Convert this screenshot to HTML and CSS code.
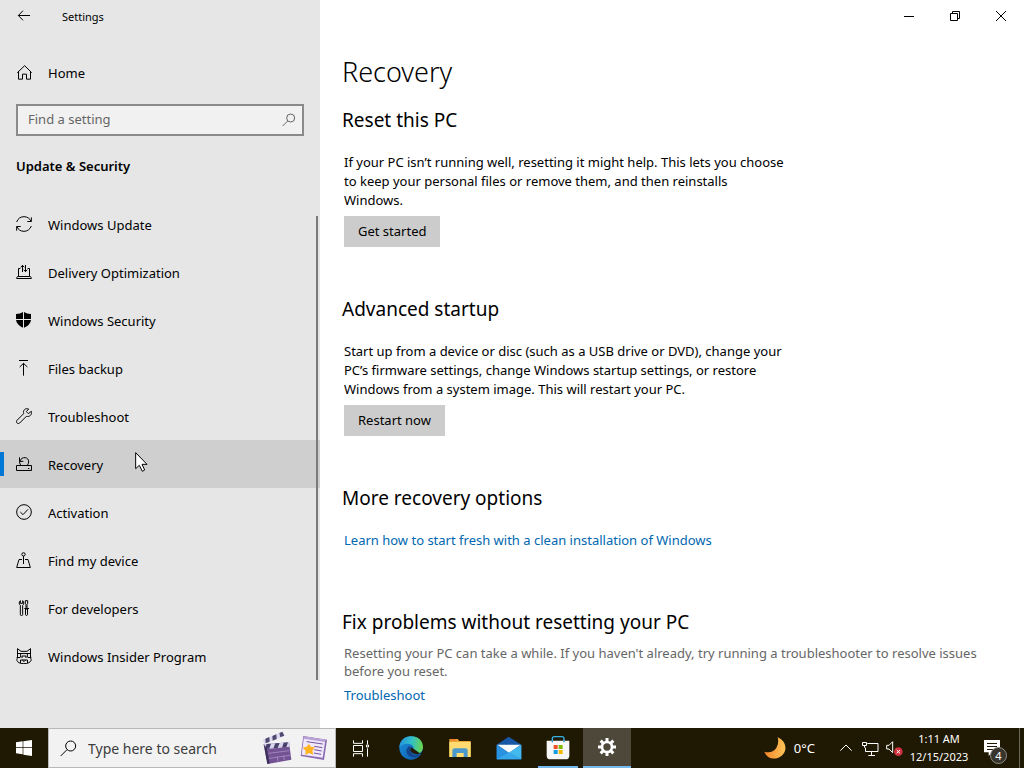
FILE: index.html
```html
<!DOCTYPE html>
<html lang="en">
<head>
    <meta charset="UTF-8">
    <meta name="viewport" content="width=device-width, initial-scale=1.0">
    <title>Settings</title>
    <link rel="stylesheet" href="styles.css">
</head>
<body>
    <div class="window">
        <aside class="sidebar">
            <div class="title-bar">
                <button class="back-button" aria-label="Back">
                    <svg width="16" height="16" viewBox="0 0 48 48" class="icon"><path d="M42 22.500H7M21 8L7 22.500 21 37"/></svg>
                </button>
                <span class="app-title">Settings</span>
            </div>

            <a href="#" class="nav-item">
                <svg width="16" height="16" viewBox="0 0 48 48" class="icon"><path d="M4 26L26 5l21 21M7.500 23v22.500h12v-15h12v15h12V23"/></svg>
                <span>Home</span>
            </a>

            <div class="setting-search">
                <input type="text" aria-label="Find a setting" placeholder="Find a setting">
                <svg width="14" height="14" viewBox="0 0 42 42" class="icon"><circle cx="26" cy="15" r="12"/><path d="M17 24L2 39"/></svg>
            </div>

            <h2 class="category">Update &amp; Security</h2>

            <nav class="nav">
                <a href="#" class="nav-item">
                    <svg width="16" height="16" viewBox="0 0 48 48" class="icon"><path d="M2 18C6 7 14 2 24 2c10 0 18 6 21 14M46 30c-4 10-12 16-22 16C14 46 6 41 3 32M46 4v12.500H34M2 44V31.500h12"/></svg>
                    <span>Windows Update</span>
                </a>
                <a href="#" class="nav-item">
                    <svg width="16" height="16" viewBox="0 0 48 48" class="icon"><path d="M13 13.500H7.500V36L2 40.500v3h44v-3L40.500 36V13.500H35M6 37.500h36M19.500 24V4M14 10l5.500-6 5.500 6M28.500 3v20M23 17l5.500 6 5.500-6"/></svg>
                    <span>Delivery Optimization</span>
                </a>
                <a href="#" class="nav-item">
                    <svg width="16" height="16" viewBox="0 0 48 48"><path d="M21 0v21H0V6c9 0 15-2 21-6zM24 0c6 4 12 6 21 6v15H24zM0 24h21v23C9 42 2 35 0 24zM24 24h21c-2 11-8 18-21 23z"/></svg>
                    <span>Windows Security</span>
                </a>
                <a href="#" class="nav-item">
                    <svg width="16" height="16" viewBox="0 0 48 48" class="icon"><path d="M9 1.500h27M22.500 47V10M11 21l11.500-11L34 21"/></svg>
                    <span>Files backup</span>
                </a>
                <a href="#" class="nav-item">
                    <svg width="16" height="16" viewBox="0 0 48 48" class="icon"><path d="M38 3C28-1 20 7 23 17L3 37c-3 3-2 6 0 8s6 2 8 0l20-20c10 3 18-6 15-15l-9 7-6-6z"/></svg>
                    <span>Troubleshoot</span>
                </a>
                <a href="#" class="nav-item active">
                    <svg width="16" height="16" viewBox="0 0 48 48" class="icon"><path d="M1.500 28.500h45v15h-45zM14 27c-3-4-4-8-2-12 5-15 27-13 26 3 0 4-2 7-4 10M10.500 4v12H22M36 37.500h4"/></svg>
                    <span>Recovery</span>
                </a>
                <a href="#" class="nav-item">
                    <svg width="16" height="16" viewBox="0 0 48 48" class="icon"><circle cx="24" cy="24" r="22"/><path d="M13 24l8 8 15-16"/></svg>
                    <span>Activation</span>
                </a>
                <a href="#" class="nav-item">
                    <svg width="16" height="16" viewBox="0 0 48 48" class="icon"><circle cx="22.500" cy="7" r="5"/><path d="M22.500 12v24M18 22.500H9L2 46.500h41l-7-24h-9"/></svg>
                    <span>Find my device</span>
                </a>
                <a href="#" class="nav-item">
                    <svg width="16" height="16" viewBox="0 0 48 48" class="icon"><path d="M13 2c-5 4-4 11 0 14v28c0 4 7 4 7 0V16c5-3 4-10 0-14v8h-7zM28 2h7v8l-2 4v13h-3V14l-2-4zM25 25.500h14M28.500 26v18c0 3 6 3 6 0V26"/></svg>
                    <span>For developers</span>
                </a>
                <a href="#" class="nav-item">
                    <svg width="16" height="16" viewBox="0 0 48 48" class="icon"><path d="M4.500 2v26c0 4-3 6-2 9 2 6 9 10 21 10s20-4 22-10c1-3-2-5-2-9V2L33 10H15zM4.500 16.500h39M14 18v9h7v-6M34 18v9h-7v-6M2 28.500h11M46 28.500H35M13.500 45v-9h21v9M19 36l5 5 5-5"/></svg>
                    <span>Windows Insider Program</span>
                </a>
                <div class="scroll-thumb"></div>
            </nav>
        </aside>

        <main class="content">
            <div class="window-controls">
                <button aria-label="Minimize"><svg width="10" height="10" viewBox="0 0 10 10" class="caption-icon"><path d="M0 5.500h10"/></svg></button>
                <button aria-label="Restore"><svg width="10" height="10" viewBox="0 0 10 10" class="caption-icon"><path d="M.5 2.500h7v7h-7zM2.500 2.500v-2h7v7h-2"/></svg></button>
                <button aria-label="Close"><svg width="10" height="10" viewBox="0 0 10 10" class="caption-icon"><path d="M0 0l10 10M10 0L0 10"/></svg></button>
            </div>

            <h1>Recovery</h1>

            <section class="section">
                <h2>Reset this PC</h2>
                <p>If your PC isn’t running well, resetting it might help. This lets you choose to keep your personal files or remove them, and then reinstalls Windows.</p>
                <button class="action">Get started</button>
            </section>

            <section class="section">
                <h2>Advanced startup</h2>
                <p>Start up from a device or disc (such as a USB drive or DVD), change your PC’s firmware settings, change Windows startup settings, or restore Windows from a system image. This will restart your PC.</p>
                <button class="action">Restart now</button>
            </section>

            <section class="section more">
                <h2>More recovery options</h2>
                <a href="#" class="link">Learn how to start fresh with a clean installation of Windows</a>
            </section>

            <section class="section fix">
                <h2>Fix problems without resetting your PC</h2>
                <p>Resetting your PC can take a while. If you haven't already, try running a troubleshooter to resolve issues before you reset.</p>
                <a href="#" class="link">Troubleshoot</a>
            </section>
        </main>
    </div>

    <footer class="taskbar">
        <button class="task" aria-label="Start">
            <svg width="16" height="16" viewBox="0 0 48 48" fill="#fff"><path d="M0 7l20-3v18H0zM22 4l26-4v22H22zM0 24h20v19L0 40zM22 24h26v24l-26-4z"/></svg>
        </button>

        <div class="task-search">
            <svg width="17" height="17" viewBox="0 0 51 51" class="icon"><circle cx="32" cy="18" r="15"/><path d="M21 29L2 48"/></svg>
            <input type="text" aria-label="Type here to search" placeholder="Type here to search">
            <svg width="30" height="34" viewBox="0 0 90 102">
                <path d="M2 26L62 2l6 12L7 38z" fill="#dcdaf2"/>
                <path d="M10 23l12-5 1 14-12 5zM31 15l12-5 1 14-12 5zM52 6l9-4 6 12-12 5z" fill="#504a70"/>
                <path d="M5 40l76-6 7 52-71 13z" fill="#735394"/>
                <path d="M5 40l76-6 2 13-76 8z" fill="#d9d5ef"/>
                <path d="M14 39l13-1-5 15-14 1zM40 37l13-1-6 15-13 1zM65 35l13-1-5 15-13 1z" fill="#4a416b"/>
                <path d="M5 40l11 59 7-2-9-45z" fill="#3b2e59"/>
                <path d="M19 67l63-8M21 82l63-9M46 77l2 14M65 74l2 13" stroke="#b69cd0" stroke-width="2"/>
            </svg>
            <svg width="28" height="26" viewBox="0 0 84 78">
                <path d="M10 3l71 11-9 61L2 63z" fill="#8b6bb1"/>
                <path d="M12 5l64 10-8 53L5 59z" fill="#eee8fa"/>
                <path d="M12 5l64 10-1 6-64-10z" fill="#b7a0d5"/>
                <path d="M20 20l48 7M43 34l24 4M43 44l22 4M42 54l21 4" stroke="#7552a0" stroke-width="3"/>
                <path d="M27 26l6 10 12 1-8 10 3 12-13-5-11 6 1-13-9-9 12-3z" fill="#ffb31f"/>
            </svg>
        </div>

        <button class="task" aria-label="Task View">
            <svg width="17" height="17" viewBox="0 0 51 51" fill="none" stroke="#fff" stroke-width="3"><path d="M4.500 1v9h27V1M4.500 16.500h27v18h-27zM4.500 50v-9h27v9M46.500 1v12M46.500 25v25"/><path d="M43.500 15h6v6h-6z"/></svg>
        </button>

        <div class="task-apps">
            <button class="task" aria-label="Microsoft Edge">
                <svg width="24" height="24" viewBox="0 0 72 72">
                    <defs>
                        <linearGradient id="edge-top" x1="0" x2="1" y1=".4" y2=".5"><stop offset="0" stop-color="#2593dc"/><stop offset=".5" stop-color="#33bfc8"/><stop offset="1" stop-color="#68d64b"/></linearGradient>
                        <linearGradient id="edge-side" x1="0" x2="1" y1="0" y2="1"><stop offset="0" stop-color="#1b92de"/><stop offset="1" stop-color="#0b58a8"/></linearGradient>
                    </defs>
                    <circle cx="36" cy="36" r="35" fill="url(#edge-side)"/>
                    <path d="M1 34C3 12 18 1 36 1c22 0 36 14 36 32 0 13-9 20-21 20-9 0-15-5-10-10 8-10-2-20-15-20C15 23 5 27 1 34z" fill="url(#edge-top)"/>
                    <path d="M28 32c-10 9-8 26 10 31 11 3 22-1 29-8-8 3-18 5-26-1-8-5-10-13-5-20-2-3-5-4-8-2z" fill="#15458c"/>
                    <path d="M37 34c-6 8-2 15 5 18 10 5 18 2 25-2 3-2 5 2 2 6" fill="#211a08"/>
                </svg>
            </button>
            <button class="task" aria-label="File Explorer">
                <svg width="22" height="20" viewBox="0 0 66 60">
                    <path d="M1 3h25l5 6h34v48H1z" fill="#e9a533"/>
                    <path d="M1 12h64v45H1z" fill="#ffdc72"/>
                    <path d="M4 3h17v5H4z" fill="#f47f2b"/>
                    <path d="M10 57V38c0-5 3-7 7-7h32c5 0 7 2 7 7v19H44V45H23v12z" fill="#4b98cc"/>
                </svg>
            </button>
            <button class="task" aria-label="Mail">
                <svg width="26" height="24" viewBox="0 0 78 72">
                    <path d="M2 26L38 2l38 24v44H2z" fill="#1657a6"/>
                    <path d="M4 26h70L39 51z" fill="#f8fcff"/>
                    <path d="M2 26l36 24 38 20H2z" fill="#2a93e0"/>
                    <path d="M76 26v44L38 50z" fill="#43b9ed"/>
                    <path d="M2 70l36-20 38 20z" fill="#37a8ea"/>
                </svg>
            </button>
            <button class="task open" aria-label="Microsoft Store">
                <svg width="24" height="24" viewBox="0 0 72 72">
                    <path d="M19 17V8c0-4 2-6 6-6h23c4 0 6 2 6 6v9" fill="none" stroke="#35b1e3" stroke-width="4"/>
                    <path d="M2 14h68v45c0 7-4 11-11 11H13C6 70 2 66 2 59z" fill="#f7f7f7"/>
                    <path d="M19 14v5M54 14v5" stroke="#1d8fc4" stroke-width="4"/>
                    <path d="M23 27h12v12H23z" fill="#f05125"/><path d="M38 27h12v12H38z" fill="#7fba00"/>
                    <path d="M23 42h12v12H23z" fill="#159be2"/><path d="M38 42h12v12H38z" fill="#fbb800"/>
                </svg>
            </button>
            <button class="task current" aria-label="Settings">
                <svg width="18" height="18" viewBox="0 0 54 54">
                    <circle cx="27" cy="27" r="15" fill="none" stroke="#fff" stroke-width="8"/>
                    <path d="M27 0v11M27 43v11M0 27h11M43 27h11M8 8l8 8M38 38l8 8M46 8l-8 8M16 38l-8 8" stroke="#fff" stroke-width="9"/>
                </svg>
            </button>
        </div>

        <div class="tray">
            <button class="weather">
                <svg width="22" height="22" viewBox="0 0 66 66">
                    <defs><linearGradient id="moon" x1="0" x2="1"><stop offset="0" stop-color="#f4842c"/><stop offset="1" stop-color="#ffc557"/></linearGradient></defs>
                    <path d="M41 1c27 11 31 43 10 57C33 71 9 65 1 44c15 5 30 0 37-13 5-10 6-20 3-30z" fill="url(#moon)"/>
                </svg>
                <span>0°C</span>
            </button>
            <button class="tray-icon" aria-label="Show hidden icons">
                <svg width="14" height="14" viewBox="0 0 42 42" class="icon light"><path d="M4 29l17-17 17 17"/></svg>
            </button>
            <button class="tray-icon" aria-label="Network">
                <svg width="17" height="15" viewBox="0 0 51 45" class="icon light"><path d="M16 7.500h32v24H10.500V20M28.500 32v10M19 43.500h20M1.500 4.500h12v9h-12zM7.500 14v6"/></svg>
            </button>
            <button class="tray-icon" aria-label="Volume muted">
                <svg width="17" height="17" viewBox="0 0 51 51"><path d="M2 16h7L20 5v33L9 27H2z" fill="none" stroke="#fff" stroke-width="3"/><circle cx="37" cy="35" r="13" fill="#d12f3e"/><path d="M32 30l10 10M42 30L32 40" stroke="#fff" stroke-width="3"/></svg>
            </button>
            <button class="clock">
                <span>1:11 AM</span>
                <span>12/15/2023</span>
            </button>
            <button class="notifications" aria-label="Notifications">
                <svg width="16" height="16" viewBox="0 0 48 48"><path d="M0 0h48v37H24l-10 11V37H0z" fill="#fff"/><path d="M9 10.500h30M9 19.500h30M9 28.500h20" stroke="#1f1803" stroke-width="3"/></svg>
                <span class="count">4</span>
            </button>
            <div class="show-desktop"></div>
        </div>
    </footer>

    <svg class="pointer" width="13" height="20" viewBox="0 0 39 60"><path d="M2 2v48l11-10 9 18 7-4-8-17h15z" fill="#fff" stroke="#000" stroke-width="3"/></svg>
</body>
</html>
```
FILE: styles.css
```css
:root {
    --sidebar-color: #e6e6e6;
    --selected-color: #cfcfcf;
    --button-color: #cccccc;
    --accent-color: #0078d7;
    --link-color: #0067b0;
    --muted-color: #666666;
    --taskbar-color: #1f1803;
    --underline-color: #76b9ed;
}

* {
    margin: 0;
    padding: 0;
    box-sizing: border-box;
}

body {
    display: flex;
    flex-direction: column;
    height: 100vh;
    overflow: hidden;
    font-family: "Noto Sans", "Segoe UI", sans-serif;
    font-size: 13px;
    line-height: 19px;
    color: #000;
    background-color: #fff;
}

button {
    border: none;
    background: none;
    font: inherit;
    color: inherit;
}

input {
    flex: 1;
    min-width: 0;
    border: none;
    outline: none;
    background: none;
    font: inherit;
}

a {
    color: inherit;
    text-decoration: none;
}

svg {
    display: block;
    flex-shrink: 0;
}

.icon {
    fill: none;
    stroke: #000;
    stroke-width: 3;
}

.icon.light {
    stroke: #fff;
}

.window {
    flex: 1;
    min-height: 0;
    display: flex;
}

/* Sidebar */
.sidebar {
    width: 320px;
    flex-shrink: 0;
    background-color: var(--sidebar-color);
}

.title-bar {
    display: flex;
    align-items: center;
    height: 32px;
    margin-bottom: 16px;
}

.back-button {
    display: flex;
    align-items: center;
    justify-content: center;
    width: 48px;
    height: 32px;
}

.app-title {
    padding-left: 14px;
    font-size: 11px;
}

.nav-item {
    position: relative;
    display: flex;
    align-items: center;
    gap: 16px;
    height: 48px;
    padding: 0 16px;
}

.nav-item span {
    padding-top: 2px;
}

.nav-item.active {
    background-color: var(--selected-color);
}

.nav-item.active::before {
    content: "";
    position: absolute;
    left: 0;
    top: 12px;
    width: 4px;
    height: 24px;
    background-color: var(--accent-color);
}

.setting-search {
    display: flex;
    align-items: center;
    height: 32px;
    margin: 8px 16px 20px;
    padding: 0 6px 0 10px;
    border: 2px solid #8a8a8a;
    background-color: #f1f1f1;
}

.setting-search input {
    padding-bottom: 2px;
}

.setting-search input::placeholder {
    color: var(--muted-color);
}

.setting-search .icon {
    stroke: var(--muted-color);
}

.category {
    margin: 0 16px 24px;
    font-size: 13px;
    line-height: 20px;
    font-weight: 600;
}

.nav {
    position: relative;
}

.scroll-thumb {
    position: absolute;
    top: 16px;
    right: 2px;
    bottom: 0;
    width: 2px;
    background-color: #7a7a7a;
}

/* Page content */
.content {
    flex: 1;
    min-width: 0;
    padding-left: 24px;
}

.window-controls {
    display: flex;
    justify-content: flex-end;
    height: 32px;
}

.window-controls button {
    display: flex;
    align-items: center;
    justify-content: center;
    width: 46px;
}

.caption-icon {
    fill: none;
    stroke: #000;
}

.content h1 {
    margin: 20px 0 14px -2px;
    font-size: 27px;
    line-height: 40px;
    font-weight: 300;
}

.section {
    margin-bottom: 48px;
}

.section h2 {
    margin: 0 0 19px -2px;
    font-size: 19px;
    line-height: 28px;
    font-weight: 400;
}

.section p {
    max-width: 445px;
    margin-bottom: 6px;
}

.action {
    display: block;
    height: 31px;
    padding: 0 14px;
    background-color: var(--button-color);
}

.link {
    display: block;
    color: var(--link-color);
}

.more {
    margin-bottom: 58px;
}

.fix h2 {
    margin-bottom: 8px;
}

.section.fix p {
    max-width: 640px;
    line-height: 18px;
    color: var(--muted-color);
}

/* Taskbar */
.taskbar {
    display: flex;
    height: 40px;
    color: #fff;
    background-color: var(--taskbar-color);
}

.task {
    display: flex;
    align-items: center;
    justify-content: center;
    width: 48px;
    height: 40px;
}

.task-search {
    display: flex;
    align-items: center;
    gap: 8px;
    width: 288px;
    padding: 0 7px 0 11px;
    border: 1px solid #b8b8b8;
    background-color: #f2f2f2;
}

.task-search input {
    padding-left: 3px;
    font-size: 14px;
}

.task-search input::placeholder {
    color: #3c3c3c;
}

.task-apps {
    display: flex;
    gap: 1px;
    padding-left: 3px;
}

.open {
    background: linear-gradient(var(--underline-color), var(--underline-color)) center bottom / 40px 2px no-repeat;
}

.current {
    border-bottom: 2px solid var(--underline-color);
    background-color: #4e483b;
}

.tray {
    display: flex;
    align-items: center;
    margin-left: auto;
}

.weather {
    display: flex;
    align-items: center;
    gap: 8px;
    margin-right: 19px;
}

.tray-icon {
    display: flex;
    align-items: center;
    justify-content: center;
    width: 24px;
    height: 40px;
}

.clock {
    display: flex;
    flex-direction: column;
    align-items: center;
    width: 66px;
    font-size: 11px;
    line-height: 18px;
}

.notifications {
    position: relative;
    display: flex;
    align-items: center;
    justify-content: center;
    width: 40px;
    height: 40px;
    margin-right: 7px;
}

.count {
    position: absolute;
    left: 18px;
    top: 19px;
    width: 17px;
    height: 17px;
    border: 1px solid #8e8b84;
    border-radius: 50%;
    background-color: #37342c;
    font-size: 11px;
    line-height: 15px;
    text-align: center;
}

.show-desktop {
    width: 5px;
    height: 40px;
    border-left: 1px solid #6c675b;
}

.pointer {
    position: absolute;
    left: 135px;
    top: 452px;
}
```
